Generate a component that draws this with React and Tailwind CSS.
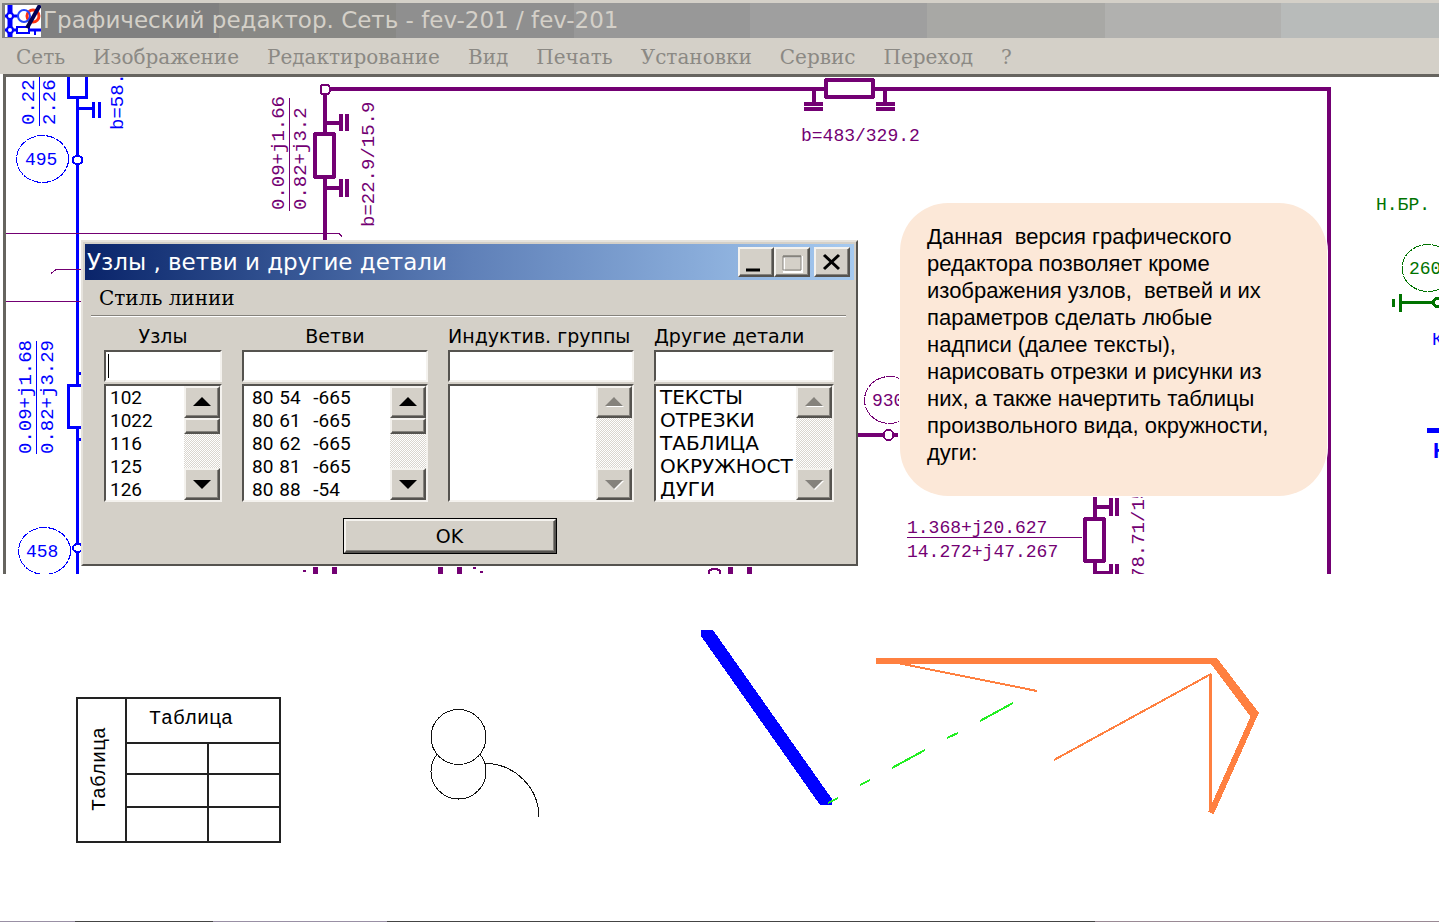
import { useState } from "react";

const PURPLE = "#730073";
const BLUE = "#0000ff";
const GREEN = "#007300";

const menu = ["Сеть", "Изображение", "Редактирование", "Вид", "Печать", "Установки", "Сервис", "Переход", "?"];

const nodes = ["102", "1022", "116", "125", "126"];
const branches = [
  ["80", "54", "-665"],
  ["80", "61", "-665"],
  ["80", "62", "-665"],
  ["80", "81", "-665"],
  ["80", "88", "-54"],
];
const details = ["ТЕКСТЫ", "ОТРЕЗКИ", "ТАБЛИЦА", "ОКРУЖНОСТ", "ДУГИ"];

// classic 3D edges
const RAISED =
  "bg-[#d4d0c8] border-2 border-t-[#f4f2ee] border-l-[#f4f2ee] border-r-[#55534f] border-b-[#55534f] shadow-[inset_-1px_-1px_0_#85827c]";
const SUNKEN =
  "bg-white border-2 border-t-[#55534f] border-l-[#55534f] border-r-[#f4f2ee] border-b-[#f4f2ee]";

function AppIcon() {
  return (
    <svg className="h-8 w-9 shrink-0 bg-white" viewBox="0 0 36 32" fill="none" aria-hidden="true">
      <path d="M5 0V32" stroke={BLUE} strokeWidth="5" />
      <path d="M0 11H14M0 25H12M24 25H36" stroke={BLUE} strokeWidth="3" />
      <circle cx="5" cy="11" r="3" fill="#fff" stroke={BLUE} strokeWidth="2" />
      <circle cx="5" cy="25" r="3" fill="#fff" stroke={BLUE} strokeWidth="2" />
      <circle cx="28" cy="11" r="6" stroke="#ff3311" strokeWidth="3" />
      <circle cx="19" cy="11" r="6" stroke="#2244ff" strokeWidth="2" />
      <path d="M12 22H24V28H12ZM30 25V30" stroke={BLUE} strokeWidth="2" />
      <path d="M35 0L22 23" stroke="#000055" strokeWidth="4" />
    </svg>
  );
}

function Label({ x, y, color, vertical, bold, children }) {
  return (
    <text
      x={x}
      y={y}
      fill={color}
      fontSize={bold ? 22 : vertical ? 19 : 18}
      fontWeight={bold ? 700 : 400}
      transform={vertical ? `rotate(-90 ${x} ${y})` : undefined}
    >
      {children}
    </text>
  );
}

function Scheme() {
  return (
    <svg
      className="absolute inset-0 h-full w-full font-['Liberation_Mono',monospace]"
      fill="none"
      shapeRendering="crispEdges"
      aria-label="Схема сети"
    >
      <g transform="translate(-6 -77)">
        {/* left blue line */}
        <g stroke={BLUE} strokeWidth="3">
          <path d="M77.5 98V574M77 108.500H93M93.500 102V118M99.500 102V118" />
          <rect x="68.500" y="60" width="18" height="37" fill="#fff" />
          <rect x="68.500" y="385" width="18" height="42" fill="#fff" />
          <path d="M77 373H81M77 439H81" />
          <ellipse cx="77.500" cy="160" rx="5" ry="4" fill="#fff" strokeWidth="2" />
          <ellipse cx="78" cy="548" rx="5" ry="4" fill="#fff" strokeWidth="2" />
        </g>
        <g stroke={BLUE}>
          <path d="M39.500 76V126M36.500 341V454" />
          <ellipse cx="42.500" cy="159" rx="26" ry="23.500" strokeDasharray="9 1" />
          <ellipse cx="44.500" cy="551" rx="26" ry="23.500" strokeDasharray="9 1" />
        </g>
        <Label x={34} y={125} color={BLUE} vertical>0.22-</Label>
        <Label x={55} y={125} color={BLUE} vertical>2.26-</Label>
        <Label x={123} y={130} color={BLUE} vertical>b=58.</Label>
        <Label x={31} y={454} color={BLUE} vertical>0.09+j1.68</Label>
        <Label x={53} y={454} color={BLUE} vertical>0.82+j3.29</Label>
        <Label x={25} y={165} color={BLUE}>495</Label>
        <Label x={26} y={557} color={BLUE}>458</Label>

        {/* purple ring */}
        <g stroke={PURPLE} strokeWidth="4">
          <path d="M325 94V240M330 89H1329V574" strokeLinejoin="round" />
          <path d="M325 122.500H340M341 114V131M347 114V131M325 188H340M341 179V197M347 179V197" />
          <rect x="315" y="134" width="19" height="43" rx="1" fill="#fff" />
          <rect x="826" y="80" width="47" height="17" rx="1" fill="#fff" />
          <path d="M814 89V103M804 103.500H823M804 109H823M885 89V103M876 103.500H895M876 109H895" />
          <path d="M858 435H898" />
          <path d="M1095 497V517M1095 507H1110M1110.500 498V516M1116.500 498V516M1095 563V573H1112M1110.500 564V574M1116.500 564V574" />
          <rect x="1085" y="519" width="19" height="42" rx="1" fill="#fff" />
          <path d="M315.500 567V574M334.500 567V574M440.500 567V574M459 567V574M730.500 567V574M749.500 567V574" strokeWidth="5" />
        </g>
        <g stroke={PURPLE} strokeWidth="2" fill="#fff">
          <rect x="320.500" y="85" width="9" height="9" rx="2" />
          <circle cx="888.500" cy="435" r="5" />
          <path d="M303 571H306M473 568H476M480 572H483M709 574V571L712 569H717L720 571V574" />
        </g>
        <g stroke={PURPLE}>
          <path d="M5 233.500H339L342 236.500M81 269.500H56L51 273.500M5 301.500H81" />
          <path d="M289.500 98V211M907 537.500H1082" />
          <ellipse cx="889.500" cy="400" rx="25" ry="23.500" strokeDasharray="9 1" />
        </g>
        <Label x={284} y={210} color={PURPLE} vertical>0.09+j1.66</Label>
        <Label x={306} y={210} color={PURPLE} vertical>0.82+j3.2</Label>
        <Label x={374} y={227} color={PURPLE} vertical>b=22.9/15.9</Label>
        <Label x={801} y={141} color={PURPLE}>b=483/329.2</Label>
        <Label x={872} y={406} color={PURPLE}>930</Label>
        <Label x={907} y={533} color={PURPLE}>1.368+j20.627</Label>
        <Label x={907} y={557} color={PURPLE}>14.272+j47.267</Label>
        <Label x={1144} y={579} color={PURPLE} vertical>78.71/15.9</Label>

        {/* right edge */}
        <g stroke={GREEN} strokeWidth="3">
          <path d="M1400 302.500H1450M1400.500 294V312M1393.500 299V307" />
          <circle cx="1438" cy="302.500" r="4.500" fill="#fff" />
          <ellipse cx="1428" cy="268" rx="26" ry="23.500" strokeWidth="1" strokeDasharray="9 1" />
        </g>
        <Label x={1376} y={210} color={GREEN}>Н.БР.</Label>
        <Label x={1409} y={274} color={GREEN}>260</Label>
        <Label x={1432} y={345} color={BLUE}>К</Label>
        <path d="M1427 430H1500" stroke={BLUE} strokeWidth="5" />
        <Label x={1433} y={458} color={BLUE} bold>Н</Label>
      </g>
    </svg>
  );
}

function Arrow({ down, disabled }) {
  return (
    <svg className="h-3 w-5" viewBox="0 0 20 12" aria-hidden="true">
      {disabled && <path d={down ? "M2 3H20L11 12Z" : "M2 11H20L11 2Z"} fill="#fff" />}
      <path d={down ? "M1 2H19L10 11Z" : "M1 10H19L10 1Z"} fill={disabled ? "#85827c" : "#000"} />
    </svg>
  );
}

function ScrollBar({ disabled }) {
  return (
    <div className="flex w-9 shrink-0 flex-col bg-[conic-gradient(#d9d5ce_25%,#fff_0_50%,#d9d5ce_0_75%,#fff_0)] bg-[size:2px_2px]">
      <button type="button" aria-label="Вверх" disabled={disabled} className={`flex h-8 items-center justify-center ${RAISED}`}>
        <Arrow disabled={disabled} />
      </button>
      {!disabled && <div className={`h-4 ${RAISED}`} />}
      <button type="button" aria-label="Вниз" disabled={disabled} className={`mt-auto flex h-8 items-center justify-center ${RAISED}`}>
        <Arrow down disabled={disabled} />
      </button>
    </div>
  );
}

function ListColumn({ id, title, className, disabled, caret, children }) {
  const [value, setValue] = useState("");
  return (
    <div className={`flex flex-col ${className}`}>
      <label htmlFor={id} className="text-[19px] leading-7 whitespace-nowrap">
        {title}
      </label>
      <div className="relative">
        <input
          id={id}
          value={value}
          onChange={(e) => setValue(e.target.value)}
          className={`block h-8 w-full px-1 outline-none ${SUNKEN}`}
        />
        {caret && <span className="absolute top-1 left-1 h-6 w-px bg-black" />}
      </div>
      <div className={`mt-0.5 flex h-[118px] ${SUNKEN}`}>
        <ul role="listbox" aria-label={title} className="min-w-0 flex-1 overflow-hidden pl-1 leading-[23px]">
          {children}
        </ul>
        <ScrollBar disabled={disabled} />
      </div>
    </div>
  );
}

function ElementsDialog() {
  return (
    <section
      role="dialog"
      aria-label="Узлы, ветви и другие детали"
      className="absolute top-[163px] left-[75px] w-[777px] border-2 border-t-[#e6e3dd] border-r-[#55534f] border-b-[#55534f] border-l-[#e6e3dd] bg-[#d4d0c8] p-0.5 font-['DejaVu_Sans',sans-serif] text-black"
    >
      <div className="flex h-9 items-center bg-linear-to-r from-[#0a246a] via-[#5f80b8] to-[#a6caf0] pr-1 pl-0.5">
        <h2 className="flex-1 text-[23px] whitespace-nowrap text-white">Узлы , ветви и другие детали</h2>
        <button type="button" aria-label="Свернуть" className={`h-[30px] w-9 ${RAISED}`}>
          <svg viewBox="0 0 32 26" className="h-full w-full" aria-hidden="true">
            <path d="M6 21H20" stroke="#000" strokeWidth="3" />
          </svg>
        </button>
        <button type="button" aria-label="Развернуть" disabled className={`h-[30px] w-9 ${RAISED}`}>
          <svg viewBox="0 0 32 26" className="h-full w-full" fill="none" aria-hidden="true">
            <path d="M8 8H26V23H8Z" stroke="#fff" strokeWidth="2" />
            <path d="M7 7H25V21H7Z" stroke="#85827c" />
            <path d="M7 7.500H25" stroke="#85827c" strokeWidth="2" />
          </svg>
        </button>
        <button type="button" aria-label="Закрыть" className={`ml-1 h-[30px] w-9 ${RAISED}`}>
          <svg viewBox="0 0 32 26" className="h-full w-full" aria-hidden="true">
            <path d="M8 6L23 20M23 6L8 20" stroke="#000" strokeWidth="3" />
          </svg>
        </button>
      </div>

      <div className="mr-2 ml-1.5 flex h-9 items-center border-b border-[#85827c] px-2 shadow-[0_1px_0_#fff]">
        <button type="button" className="font-['DejaVu_Serif',serif] text-xl">
          Стиль линии
        </button>
      </div>

      <form className="px-[19px] pt-1.5" onSubmit={(e) => e.preventDefault()}>
        <div className="flex gap-5">
          <ListColumn id="nodes" title="Узлы" className="w-[118px] text-center" caret>
            {nodes.map((n) => (
              <li key={n} role="option" aria-selected="false" className="text-left font-['Roboto',sans-serif] text-[19px]">
                {n}
              </li>
            ))}
          </ListColumn>
          <ListColumn id="branches" title="Ветви" className="w-[186px] text-center">
            {branches.map(([a, b, c]) => (
              <li
                key={b}
                role="option"
                aria-selected="false"
                className="flex gap-1.5 pl-1 text-left font-['Roboto',sans-serif] text-[19px]"
              >
                <span>{a}</span>
                <span className="w-7">{b}</span>
                <span>{c}</span>
              </li>
            ))}
          </ListColumn>
          <ListColumn id="groups" title="Индуктив. группы" className="w-[186px]" disabled />
          <ListColumn id="details" title="Другие детали" className="w-[180px]" disabled>
            {details.map((d) => (
              <li key={d} role="option" aria-selected="false" className="text-xl leading-[23px]">
                {d}
              </li>
            ))}
          </ListColumn>
        </div>
        <div className="flex justify-center pt-4 pr-10 pb-2">
          <button type="submit" className="h-9 w-[214px] border border-black">
            <span className={`flex h-full items-center justify-center text-[19px] ${RAISED}`}>OK</span>
          </button>
        </div>
      </form>
    </section>
  );
}

function Drawings() {
  return (
    <svg className="h-[200px] w-[860px] shrink-0" viewBox="420 620 860 200" fill="none" shapeRendering="crispEdges" aria-hidden="true">
      {/* circles and arc */}
      <g stroke="#111">
        <circle cx="458.500" cy="771.500" r="27.500" />
        <circle cx="458.500" cy="737" r="27.500" fill="#fff" />
        <path d="M485 763.500A54 54 0 0 1 539 817" />
      </g>

      {/* segments */}
      <path d="M701 630H713L832 799V805H820L701 636Z" fill={BLUE} />
      <g stroke="#ff8040">
        <path d="M876 660.500H1214" strokeWidth="6" />
        <path d="M1211 658H1217L1259 713L1253 720L1208 660Z" fill="#ff8040" stroke="none" />
        <path d="M1255 714L1211 813" strokeWidth="6" />
        <path d="M898 663L1037 691M1054 760L1211 674" strokeWidth="2" />
        <path d="M1210.500 674V812" strokeWidth="3" />
      </g>
      <path
        d="M828 803L838 798M860 785L870 780M892 768L925 750M947 738L958 733M980 721L1013 703"
        stroke="#22ee22"
        strokeWidth="2"
      />
    </svg>
  );
}

export default function App() {
  const cell = "border-2 border-[#222] p-0 font-normal";

  return (
    <div className="flex min-h-screen flex-col overflow-hidden bg-white">
      <header className="bg-[#d4d0c8] pt-[3px] pl-0.5">
        <div className="flex h-[35px] items-center gap-0.5 bg-[linear-gradient(90deg,#808080_217px,#888885_217px_394px,#8f8f8f_394px_572px,#989898_572px_748px,#9f9f9f_748px_925px,#a8a8a5_925px_1103px,#b1b1af_1103px_1279px,#b8bbba_1279px)] pl-[3px]">
          <AppIcon />
          <h1 className="font-['DejaVu_Sans',sans-serif] text-[23px] whitespace-nowrap text-[#d4d0c8]">
            Графический редактор. Сеть - fev-201 / fev-201
          </h1>
        </div>
        <nav className="flex h-9 items-center gap-7 pt-0.5 pl-3.5 font-['DejaVu_Serif',serif] text-xl text-[#8b8984]">
          {menu.map((m) => (
            <button key={m} type="button">
              {m}
            </button>
          ))}
        </nav>
      </header>

      <main className="relative ml-[3px] h-[500px] overflow-hidden border-t-3 border-l-3 border-[#66645f]">
        <Scheme />
        <ElementsDialog />
        <aside className="absolute top-[126px] left-[894px] h-[293px] w-[427px] rounded-[48px] bg-[#fce8d8] px-[27px] py-5 font-['Liberation_Sans',sans-serif] text-[22px] leading-[27px] whitespace-pre text-black ring-1 ring-white">
          <p>
            Данная  версия графического{"\n"}
            редактора позволяет кроме{"\n"}
            изображения узлов,  ветвей и их{"\n"}
            параметров сделать любые{"\n"}
            надписи (далее тексты),{"\n"}
            нарисовать отрезки и рисунки из{"\n"}
            них, а также начертить таблицы{"\n"}
            произвольного вида, окружности,{"\n"}
            дуги:
          </p>
        </aside>
      </main>

      <section className="flex flex-1 items-start pt-[46px] pl-[76px]">
        <table className="mt-[77px] mr-[139px] h-36 w-[205px] shrink-0 table-fixed border-collapse font-['Liberation_Mono',monospace] text-xl text-black">
          <colgroup>
            <col className="w-[49px]" />
            <col className="w-[82px]" />
            <col />
          </colgroup>
          <tbody>
            <tr className="h-[45px]">
              <th rowSpan={4} className="border-2 border-[#222] pt-2 pr-1 font-normal">
                <span className="inline-block rotate-180 [writing-mode:vertical-rl]">Таблица</span>
              </th>
              <th colSpan={2} className="border-2 border-[#222] pr-6 pb-1 font-normal">
                Таблица
              </th>
            </tr>
            <tr className="h-[31px]">
              <td className={cell} />
              <td className={cell} />
            </tr>
            <tr className="h-[33px]">
              <td className={cell} />
              <td className={cell} />
            </tr>
            <tr className="h-[35px]">
              <td className={cell} />
              <td className={cell} />
            </tr>
          </tbody>
        </table>
        <Drawings />
      </section>

      <footer className="h-px bg-[linear-gradient(90deg,#9990a5_75px,#444_75px_213px,#9990a5_213px_387px,#444_387px_1095px,#9a8a95_1095px)]" />
    </div>
  );
}
